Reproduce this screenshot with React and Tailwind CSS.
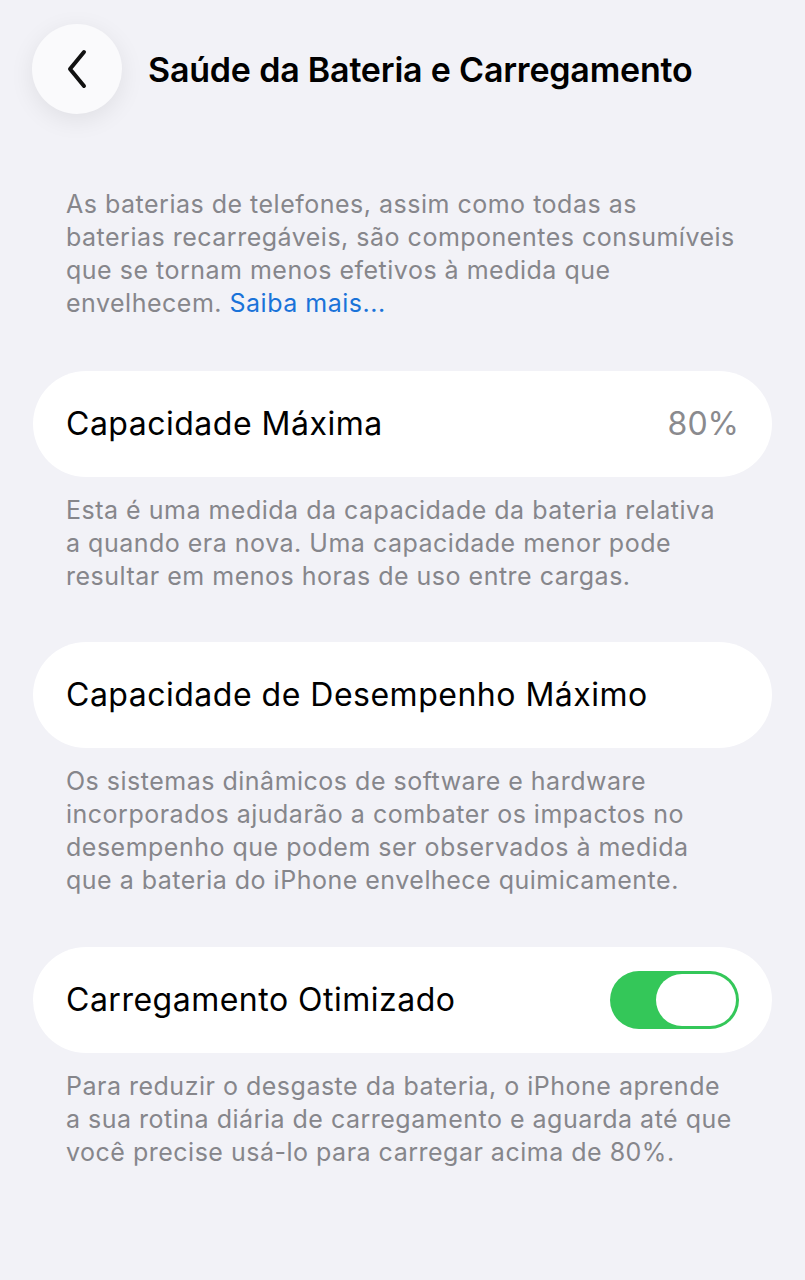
import { useState } from "react";

const Footer = ({ lines, className = "" }) => (
  <p className={`whitespace-nowrap px-[66px] text-[25px] leading-[33px] tracking-[0.5px] text-[#86868b] ${className}`}>
    {lines.map((l, i) => (
      <span key={i} className="block">
        {l}
      </span>
    ))}
  </p>
);

const Card = ({ children }) => (
  <div className="mx-[33px] flex h-[106px] items-center justify-between rounded-[53px] bg-white px-[33px]">
    {children}
  </div>
);

export default function App() {
  const [on, setOn] = useState(true);

  return (
    <div className="min-h-[1280px] bg-[#f2f2f7] font-['Inter',sans-serif] text-black">
      {/* header */}
      <div className="flex items-center gap-[26px] pl-[32px] pt-[24px]">
        <button className="flex h-[90px] w-[90px] items-center justify-center rounded-full bg-[#fafafc] shadow-[0_6px_24px_rgba(0,0,0,0.08)]">
          <svg width="30" height="44" viewBox="0 0 30 44" fill="none">
            <path d="M22 5 L8 22 L22 39" stroke="#111" strokeWidth="4" strokeLinecap="round" strokeLinejoin="round" />
          </svg>
        </button>
        <h1 className="text-[34px] font-semibold tracking-[-0.2px]">Saúde da Bateria e Carregamento</h1>
      </div>

      <Footer
        className="mt-[74px]"
        lines={[
          "As baterias de telefones, assim como todas as",
          "baterias recarregáveis, são componentes consumíveis",
          "que se tornam menos efetivos à medida que",
          <>
            envelhecem. <span className="text-[#1a73d9]">Saiba mais...</span>
          </>,
        ]}
      />

      <div className="mt-[51px]">
        <Card>
          <span className="text-[32px] tracking-[0.5px]">Capacidade Máxima</span>
          <span className="text-[32px] text-[#8a8a8e]">80%</span>
        </Card>
      </div>
      <Footer
        className="mt-[17px]"
        lines={[
          "Esta é uma medida da capacidade da bateria relativa",
          "a quando era nova. Uma capacidade menor pode",
          "resultar em menos horas de uso entre cargas.",
        ]}
      />

      <div className="mt-[49px]">
        <Card>
          <span className="text-[32px] tracking-[0.5px]">Capacidade de Desempenho Máximo</span>
        </Card>
      </div>
      <Footer
        className="mt-[17px]"
        lines={[
          "Os sistemas dinâmicos de software e hardware",
          "incorporados ajudarão a combater os impactos no",
          "desempenho que podem ser observados à medida",
          "que a bateria do iPhone envelhece quimicamente.",
        ]}
      />

      <div className="mt-[50px]">
        <Card>
          <span className="text-[32px] tracking-[0.5px]">Carregamento Otimizado</span>
          <button
            onClick={() => setOn(!on)}
            className={`flex h-[58px] w-[129px] items-center rounded-full p-[3px] ${on ? "justify-end bg-[#34c759]" : "justify-start bg-[#e5e5ea]"}`}
          >
            <span className="h-[52px] w-[80px] rounded-full bg-white" />
          </button>
        </Card>
      </div>
      <Footer
        className="mt-[17px]"
        lines={[
          "Para reduzir o desgaste da bateria, o iPhone aprende",
          "a sua rotina diária de carregamento e aguarda até que",
          "você precise usá-lo para carregar acima de 80%.",
        ]}
      />
    </div>
  );
}
